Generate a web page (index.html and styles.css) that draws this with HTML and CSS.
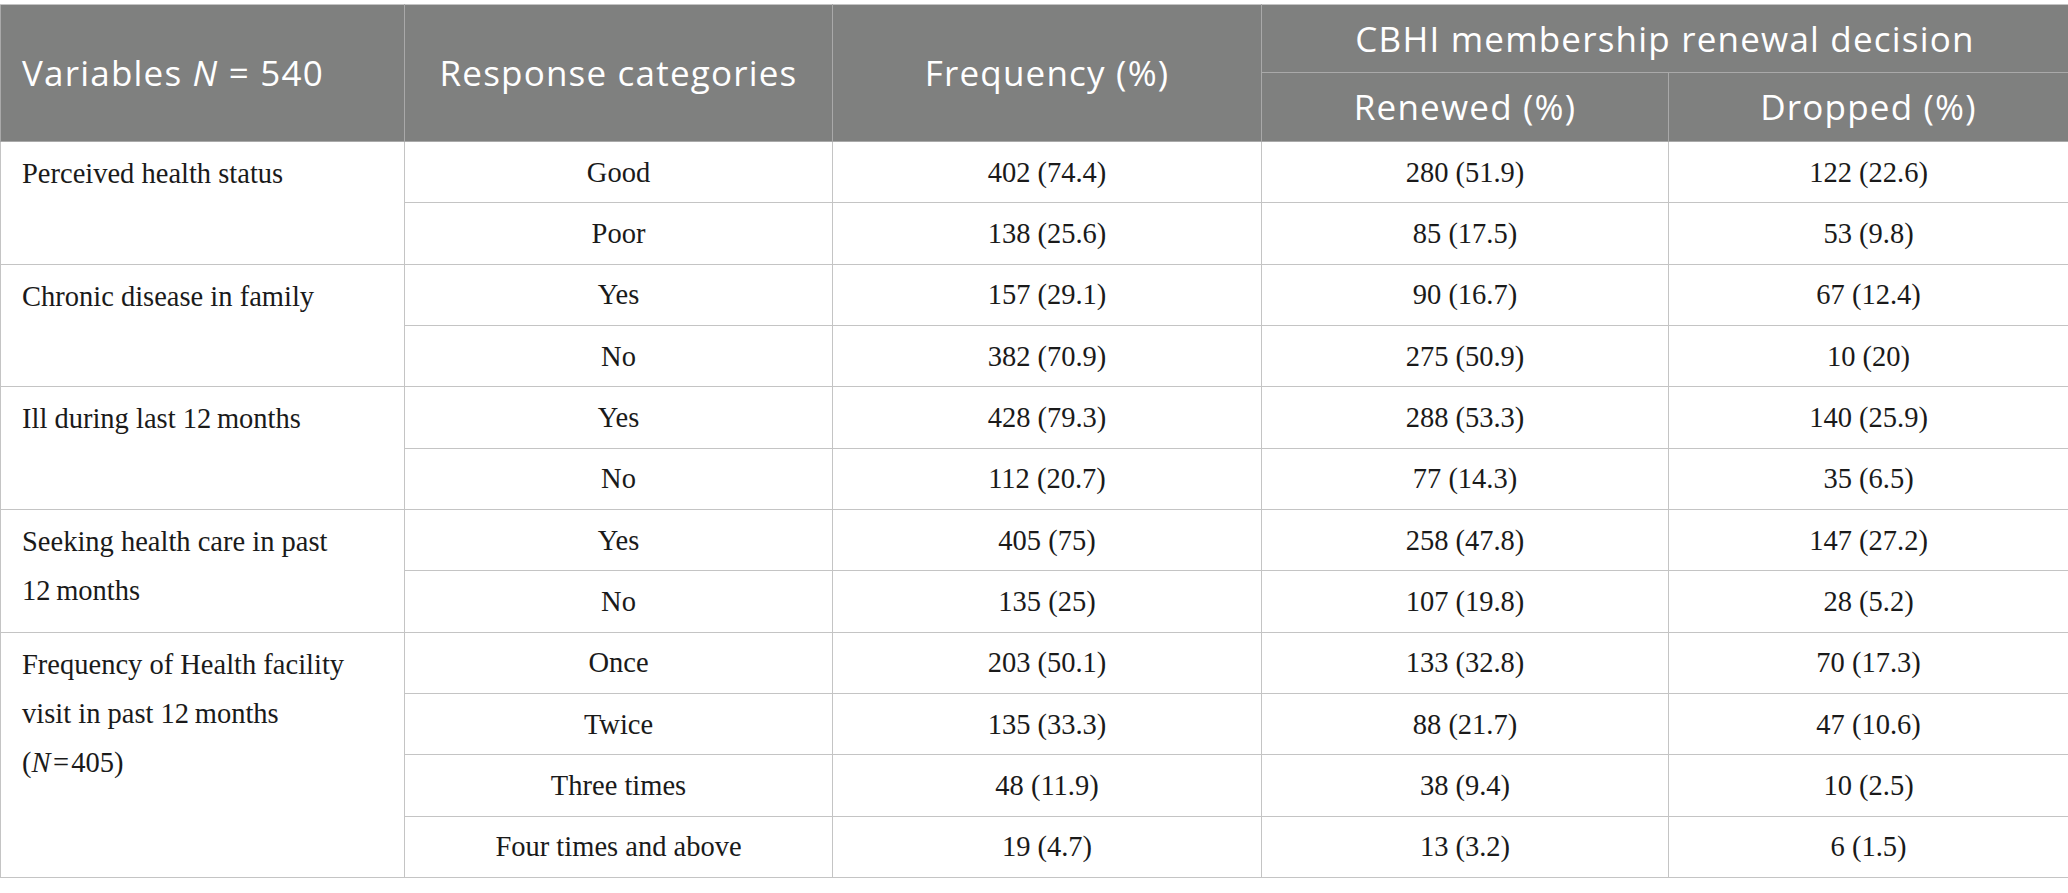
FILE: index.html
```html
<!DOCTYPE html>
<html lang="en">
<head>
<meta charset="utf-8">
<title>CBHI membership renewal decision</title>
<link rel="stylesheet" href="styles.css">
</head>
<body>
<table class="data">
  <colgroup>
    <col class="c1"><col class="c2"><col class="c3"><col class="c4"><col class="c5">
  </colgroup>
  <thead>
    <tr class="h1">
      <th rowspan="2" class="lefthead">Variables <i>N</i> = 540</th>
      <th rowspan="2">Response categories</th>
      <th rowspan="2">Frequency (%)</th>
      <th colspan="2">CBHI membership renewal decision</th>
    </tr>
    <tr class="h2">
      <th>Renewed (%)</th>
      <th>Dropped (%)</th>
    </tr>
  </thead>
  <tbody>
    <tr>
      <td rowspan="2" class="var">Perceived health status</td>
      <td>Good</td><td>402 (74.4)</td><td>280 (51.9)</td><td>122 (22.6)</td>
    </tr>
    <tr><td>Poor</td><td>138 (25.6)</td><td>85 (17.5)</td><td>53 (9.8)</td></tr>
    <tr>
      <td rowspan="2" class="var">Chronic disease in family</td>
      <td>Yes</td><td>157 (29.1)</td><td>90 (16.7)</td><td>67 (12.4)</td>
    </tr>
    <tr><td>No</td><td>382 (70.9)</td><td>275 (50.9)</td><td>10 (20)</td></tr>
    <tr>
      <td rowspan="2" class="var">Ill during last 12&#8201;months</td>
      <td>Yes</td><td>428 (79.3)</td><td>288 (53.3)</td><td>140 (25.9)</td>
    </tr>
    <tr><td>No</td><td>112 (20.7)</td><td>77 (14.3)</td><td>35 (6.5)</td></tr>
    <tr>
      <td rowspan="2" class="var">Seeking health care in past<br>12&#8201;months</td>
      <td>Yes</td><td>405 (75)</td><td>258 (47.8)</td><td>147 (27.2)</td>
    </tr>
    <tr><td>No</td><td>135 (25)</td><td>107 (19.8)</td><td>28 (5.2)</td></tr>
    <tr>
      <td rowspan="4" class="var">Frequency of Health facility<br>visit in past 12&#8201;months<br>(<i>N</i>&#8202;=&#8202;405)</td>
      <td>Once</td><td>203 (50.1)</td><td>133 (32.8)</td><td>70 (17.3)</td>
    </tr>
    <tr><td>Twice</td><td>135 (33.3)</td><td>88 (21.7)</td><td>47 (10.6)</td></tr>
    <tr><td>Three times</td><td>48 (11.9)</td><td>38 (9.4)</td><td>10 (2.5)</td></tr>
    <tr><td>Four times and above</td><td>19 (4.7)</td><td>13 (3.2)</td><td>6 (1.5)</td></tr>
  </tbody>
</table>
</body>
</html>
```

FILE: styles.css
```css
html, body {
  margin: 0;
  padding: 0;
  background: #ffffff;
}
body {
  padding-top: 4px;
}
.data {
  width: 2068px;
  border-collapse: collapse;
  table-layout: fixed;
  font-family: "Liberation Serif", "Times New Roman", serif;
  font-size: 28.5px;
  color: #1a1a1a;
}
.c1 { width: 404px; }
.c2 { width: 428px; }
.c3 { width: 429px; }
.c4 { width: 407px; }
.c5 { width: 400px; }

.data th {
  background: #7f807f;
  color: #ffffff;
  font-family: "Open Sans", "Noto Sans", sans-serif;
  font-weight: 400;
  font-size: 35px;
  letter-spacing: 1.2px;
  line-height: 44px;
  border: 1px solid #a9a9a9;
  text-align: center;
  vertical-align: middle;
  padding: 0 6px;
}
.data thead tr:first-child th {
  border-top-color: #c4c4c4;
}
.data .h1 { height: 68px; }
.data .h2 { height: 69px; }
.data th.lefthead {
  text-align: left;
  padding-left: 21px;
}
.data th i {
  font-style: italic;
}
.data tbody tr {
  height: 61.33px;
}
.data td {
  border: 1px solid #c4c4c4;
  text-align: center;
  vertical-align: middle;
  line-height: 49px;
  padding: 0 10px;
}
.data td.var {
  text-align: left;
  vertical-align: top;
  padding: 7px 21px 5px 21px;
}
```
